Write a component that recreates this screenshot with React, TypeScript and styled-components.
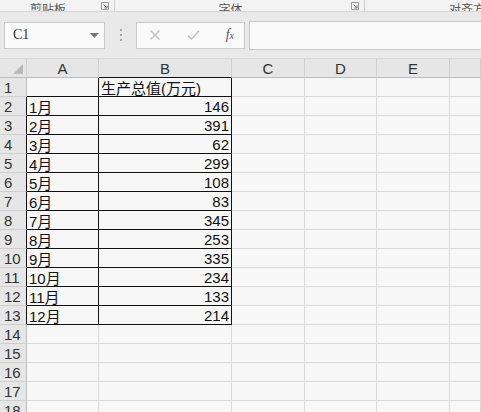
import styled, { createGlobalStyle } from 'styled-components';

const GlobalStyle = createGlobalStyle`
  html, body {
    margin: 0;
    padding: 0;
    background: #f7f7f7;
    overflow: hidden;
  }
`;

const data = [
  ['1月', '146'],
  ['2月', '391'],
  ['3月', '62'],
  ['4月', '299'],
  ['5月', '108'],
  ['6月', '83'],
  ['7月', '345'],
  ['8月', '253'],
  ['9月', '335'],
  ['10月', '234'],
  ['11月', '133'],
  ['12月', '214'],
];

const columns = ['A', 'B', 'C', 'D', 'E', ''];
const totalRows = 18;

function Launcher() {
  return (
    <svg width="8" height="8" viewBox="0 0 8 8">
      <path d="M0.5 0.5H7.5V7.5H0.5Z" fill="none" stroke="#9a9a9a" strokeWidth="1" />
      <path d="M2.5 2.5L6 6M6 3.5V6H3.5" fill="none" stroke="#777" strokeWidth="1" />
    </svg>
  );
}

export default function App() {
  const rows = Array.from({ length: totalRows }, (_, i) => i + 1);
  return (
    <Page>
      <GlobalStyle />
      <Ribbon>
        <Group $width={115} $pad={0}>
          <GroupLabel>剪贴板</GroupLabel>
          <LauncherSlot>
            <Launcher />
          </LauncherSlot>
        </Group>
        <Group $width={250} $pad={0}>
          <GroupLabel>字体</GroupLabel>
          <LauncherSlot>
            <Launcher />
          </LauncherSlot>
        </Group>
        <Group $width={200} $pad={84} $last>
          <GroupLabel $left>对齐方式</GroupLabel>
        </Group>
      </Ribbon>

      <FormulaBar>
        <NameBox>
          <NameText>C1</NameText>
          <svg width="9" height="5" viewBox="0 0 9 5">
            <path d="M0 0H9L4.5 5Z" fill="#777" />
          </svg>
        </NameBox>
        <Grip>
          <Dot />
          <Dot />
          <Dot />
        </Grip>
        <FxBox>
          <svg width="12" height="12" viewBox="0 0 12 12">
            <path d="M1.5 1.5L10.5 10.5M10.5 1.5L1.5 10.5" stroke="#bdbdbd" strokeWidth="1.3" />
          </svg>
          <svg width="13" height="12" viewBox="0 0 13 12">
            <path d="M1 6.5L4.5 10L12 2" stroke="#bdbdbd" strokeWidth="1.4" fill="none" />
          </svg>
          <FxText>
            f<sub>x</sub>
          </FxText>
        </FxBox>
        <FormulaInput />
      </FormulaBar>

      <Sheet>
        <Corner>
          <svg width="10" height="10" viewBox="0 0 10 10">
            <path d="M10 0V10H0Z" fill="#b9b9b9" />
          </svg>
        </Corner>
        {columns.map((c, i) => (
          <ColHeader key={'h' + i} $black={c === 'B'}>
            {c}
          </ColHeader>
        ))}
        {rows.map((r) => {
          const inTable = r >= 2 && r <= 13;
          const item = data[r - 2];
          return [
            <RowHeader key={'r' + r} $black={inTable}>
              {r}
            </RowHeader>,
            ...columns.map((c, ci) => {
              let text = '';
              let bordered = false;
              let align: 'left' | 'right' = 'left';
              if (r === 1 && c === 'A') {
                bordered = true;
              } else if (r === 1 && c === 'B') {
                bordered = true;
                text = '生产总值(万元)';
              } else if (inTable && c === 'A') {
                bordered = true;
                text = item[0];
              } else if (inTable && c === 'B') {
                bordered = true;
                text = item[1];
                align = 'right';
              }
              return (
                <Cell key={r + '-' + ci} $black={bordered} $align={align}>
                  {text}
                </Cell>
              );
            }),
          ];
        })}
      </Sheet>
    </Page>
  );
}

const Page = styled.div`
  width: 481px;
  height: 412px;
  overflow: hidden;
  background: #f7f7f7;
  font-family: 'Liberation Sans', 'Noto Sans CJK SC', sans-serif;
`;

const Ribbon = styled.div`
  display: flex;
  height: 11px;
  overflow: hidden;
  background: #f3f3f3;
  border-bottom: 1px solid #d6d6d6;
`;

const Group = styled.div<{ $width: number; $pad: number; $last?: boolean }>`
  position: relative;
  flex: 0 0 ${(p) => p.$width}px;
  display: flex;
  align-items: flex-end;
  padding-left: ${(p) => p.$pad}px;
  box-sizing: border-box;
  border-right: ${(p) => (p.$last ? 'none' : '1px solid #d0d0d0')};
`;

const GroupLabel = styled.div<{ $left?: boolean }>`
  flex: ${(p) => (p.$left ? '0 0 auto' : '1')};
  text-align: center;
  font-family: 'Noto Sans CJK SC', sans-serif;
  font-size: 12px;
  line-height: 16px;
  color: #555;
  padding-right: ${(p) => (p.$left ? 0 : 18)}px;
  margin-bottom: -6px;
`;

const LauncherSlot = styled.div`
  position: absolute;
  right: 5px;
  bottom: 1px;
  display: flex;
`;

const FormulaBar = styled.div`
  display: flex;
  align-items: center;
  height: 47px;
  padding: 0 0 0 4px;
  box-sizing: border-box;
  background: #e9e9e9;
  border-bottom: 1px solid #dcdcdc;
`;

const NameBox = styled.div`
  width: 101px;
  height: 27px;
  box-sizing: border-box;
  display: flex;
  align-items: center;
  justify-content: space-between;
  padding: 0 5px 0 8px;
  background: #fafafa;
  border: 1px solid #c9c9c9;
`;

const NameText = styled.span`
  font-family: 'Liberation Serif', serif;
  font-size: 14px;
  color: #333;
`;

const Grip = styled.div`
  width: 31px;
  display: flex;
  flex-direction: column;
  align-items: center;
  gap: 3px;
`;

const Dot = styled.span`
  width: 2px;
  height: 2px;
  background: #a8a8a8;
`;

const FxBox = styled.div`
  width: 109px;
  height: 27px;
  box-sizing: border-box;
  display: flex;
  align-items: center;
  justify-content: space-between;
  padding: 0 10px 0 12px;
  background: #fafafa;
  border: 1px solid #c9c9c9;
`;

const FxText = styled.span`
  font-family: 'Liberation Serif', serif;
  font-style: italic;
  font-size: 14px;
  color: #555;
  sub {
    font-size: 10px;
    vertical-align: 0;
  }
`;

const FormulaInput = styled.div`
  flex: 1;
  height: 27px;
  margin-left: 4px;
  background: #fafafa;
  border: 1px solid #c9c9c9;
  border-right: none;
`;

const Sheet = styled.div`
  display: grid;
  grid-template-columns: 27px 72px 133px 73px 72px 73px 1fr;
  grid-auto-rows: 19px;
`;

const Corner = styled.div`
  box-sizing: border-box;
  background: #e6e6e6;
  border-right: 1px solid #cfcfcf;
  border-bottom: 1px solid #bdbdbd;
  display: flex;
  align-items: flex-end;
  justify-content: flex-end;
  padding: 0 3px 3px 0;
`;

const ColHeader = styled.div<{ $black?: boolean }>`
  box-sizing: border-box;
  background: #e6e6e6;
  border-right: 1px solid #cfcfcf;
  border-bottom: 1px solid ${(p) => (p.$black ? '#111' : '#bdbdbd')};
  display: flex;
  align-items: center;
  justify-content: center;
  font-size: 15px;
  color: #333;
`;

const RowHeader = styled.div<{ $black?: boolean }>`
  box-sizing: border-box;
  background: #e6e6e6;
  border-right: 1px solid ${(p) => (p.$black ? '#111' : '#bdbdbd')};
  border-bottom: 1px solid #cfcfcf;
  display: flex;
  align-items: center;
  padding-left: 4px;
  font-size: 15px;
  color: #333;
`;

const Cell = styled.div<{ $black: boolean; $align: 'left' | 'right' }>`
  box-sizing: border-box;
  background: #f7f7f7;
  border-right: 1px solid ${(p) => (p.$black ? '#111' : '#dadada')};
  border-bottom: 1px solid ${(p) => (p.$black ? '#111' : '#dadada')};
  display: flex;
  align-items: center;
  justify-content: ${(p) => (p.$align === 'right' ? 'flex-end' : 'flex-start')};
  padding: 0 2px;
  font-family: 'Liberation Sans', 'Noto Sans CJK SC', sans-serif;
  font-size: 15px;
  color: #111;
  white-space: nowrap;
  overflow: hidden;
`;
